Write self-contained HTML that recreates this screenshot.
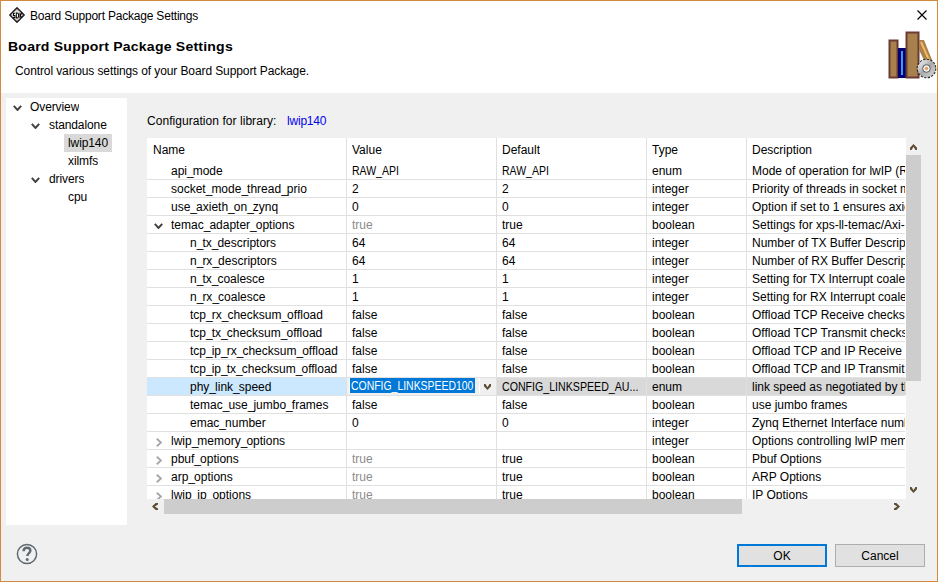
<!DOCTYPE html>
<html><head><meta charset="utf-8"><style>
*{margin:0;padding:0;box-sizing:border-box}
html,body{width:938px;height:582px;overflow:hidden;background:#f0f0f0}
body{position:relative;font-family:"Liberation Sans",sans-serif;font-size:12px;color:#000}
.a{position:absolute}
.t{position:absolute;white-space:pre;line-height:14px;height:14px}
.cell{position:absolute;white-space:pre;overflow:hidden;line-height:18px;height:18px}
.g{color:#8c8c8c}
.u{letter-spacing:-1px}
.sx{display:inline-block;transform-origin:0 50%}
</style></head><body>
<div class="a" style="left:0;top:0;width:938px;height:582px;border:1px solid #d38a40"></div>
<div class="a" style="left:1px;top:1px;width:936px;height:92px;background:#fff"></div>
<svg class="a" style="left:9px;top:7px" width="16" height="16" viewBox="0 0 16 16">
<defs><radialGradient id="sg" cx="50%" cy="50%" r="50%"><stop offset="0" stop-color="#fff"/><stop offset="0.6" stop-color="#dcdcdc"/><stop offset="0.85" stop-color="#c89060"/><stop offset="1" stop-color="#802020"/></radialGradient></defs>
<path d="M8 0.8 L15.2 8 L8 15.2 L0.8 8 Z" fill="url(#sg)" stroke="#1e1e24" stroke-width="1.4" stroke-linejoin="round"/>
<path transform="translate(8.5 8.4) scale(0.88 1) translate(-8.5 -8.4)" d="M5.8 6.3 H3.9 V8.4 H5.6 V10.6 H3.5 M7.2 5.9 V10.9 H8.2 C9.4 10.9 9.8 9.9 9.8 8.4 C9.8 6.9 9.4 5.9 8.2 5.9 Z M11.3 5.8 V11 M13.4 5.9 L11.6 8.4 L13.4 10.9" fill="none" stroke="#000" stroke-width="1.05"/>
</svg>
<div class="t" style="left:30px;top:9px;letter-spacing:-0.2px">Board Support Package Settings</div>
<svg class="a" style="left:917px;top:10px" width="10" height="10" viewBox="0 0 10 10"><path d="M0.5 0.5 L9.5 9.5 M9.5 0.5 L0.5 9.5" stroke="#000" stroke-width="1.2"/></svg>
<div class="t" style="left:8px;top:40px;font-weight:bold;font-size:13px;letter-spacing:0.2px"><span class="sx" style="transform:scaleX(1.08)">Board Support Package Settings</span></div>
<div class="t" style="left:15px;top:64px;letter-spacing:-0.1px">Control various settings of your Board Support Package.</div>
<svg class="a" style="left:886px;top:30px" width="52" height="52" viewBox="0 0 52 52">
<rect x="3.5" y="10.5" width="8" height="37" fill="#a8804c" stroke="#6b3a33" stroke-width="2"/>
<rect x="12.5" y="18.5" width="7" height="29" fill="#00007a" stroke="#000070" stroke-width="1"/>
<rect x="15" y="21" width="2" height="24" fill="#3d9be0"/>
<rect x="20.5" y="2.5" width="12" height="45" fill="#a8804c" stroke="#6b3a33" stroke-width="2"/>
<path d="M33 10 L38 10 L46 30 L40 34 L33 20 Z" fill="#a8804c"/>
<path d="M35 12 L43 30" stroke="#f5b860" stroke-width="2"/>
<defs><linearGradient id="gg" x1="0" y1="0" x2="1" y2="1"><stop offset="0" stop-color="#f4f4f4"/><stop offset="0.5" stop-color="#a8a8a8"/><stop offset="1" stop-color="#d8d8d8"/></linearGradient></defs>
<g transform="translate(40.5,38.5)">
<circle r="9.3" fill="url(#gg)" stroke="#2a2a2a" stroke-width="1.1" stroke-dasharray="2.3 1.35"/>
<circle r="7.4" fill="url(#gg)"/>
<circle r="3.8" fill="#f4f4f4" stroke="#5a5a5a" stroke-width="1"/>
<circle r="1.7" fill="#e0a060"/>
</g>
</svg>
<div class="a" style="left:6px;top:98px;width:121px;height:427px;background:#fff"></div>
<div class="a" style="left:64px;top:134px;width:48px;height:18px;background:#d9d9d9"></div>
<svg class="a" style="left:13px;top:105px" width="9" height="6" viewBox="0 0 9 6"><path d="M0.8 0.8 L4.5 5 L8.2 0.8" fill="none" stroke="#404040" stroke-width="1.9"/></svg>
<div class="cell" style="left:30px;top:98px;letter-spacing:-0.1px">Overview</div>
<svg class="a" style="left:31px;top:123px" width="9" height="6" viewBox="0 0 9 6"><path d="M0.8 0.8 L4.5 5 L8.2 0.8" fill="none" stroke="#404040" stroke-width="1.9"/></svg>
<div class="cell" style="left:49px;top:116px;letter-spacing:-0.1px">standalone</div>
<div class="cell" style="left:68px;top:134px;letter-spacing:-0.1px">lwip140</div>
<div class="cell" style="left:68px;top:152px;letter-spacing:-0.1px">xilmfs</div>
<svg class="a" style="left:31px;top:177px" width="9" height="6" viewBox="0 0 9 6"><path d="M0.8 0.8 L4.5 5 L8.2 0.8" fill="none" stroke="#404040" stroke-width="1.9"/></svg>
<div class="cell" style="left:49px;top:170px;letter-spacing:-0.1px">drivers</div>
<div class="cell" style="left:68px;top:188px;letter-spacing:-0.1px">cpu</div>
<div class="t" style="left:147px;top:114px;letter-spacing:0.05px">Configuration for library:</div>
<div class="t" style="left:287px;top:114px;color:#0000f0;letter-spacing:-0.2px">lwip140</div>
<div class="a" style="left:147px;top:138px;width:759px;height:361px;background:#fff;overflow:hidden">
<div class="a" style="left:0;top:240px;width:199px;height:17px;background:#cce8ff"></div>
<div class="a" style="left:350px;top:240px;width:409px;height:17px;background:#d9d9d9"></div>
<div class="a" style="left:0;top:41px;width:758px;height:1px;background:#e0e0e0"></div>
<div class="a" style="left:0;top:59px;width:758px;height:1px;background:#e0e0e0"></div>
<div class="a" style="left:0;top:77px;width:758px;height:1px;background:#e0e0e0"></div>
<div class="a" style="left:0;top:95px;width:758px;height:1px;background:#e0e0e0"></div>
<div class="a" style="left:0;top:113px;width:758px;height:1px;background:#e0e0e0"></div>
<div class="a" style="left:0;top:131px;width:758px;height:1px;background:#e0e0e0"></div>
<div class="a" style="left:0;top:149px;width:758px;height:1px;background:#e0e0e0"></div>
<div class="a" style="left:0;top:167px;width:758px;height:1px;background:#e0e0e0"></div>
<div class="a" style="left:0;top:185px;width:758px;height:1px;background:#e0e0e0"></div>
<div class="a" style="left:0;top:203px;width:758px;height:1px;background:#e0e0e0"></div>
<div class="a" style="left:0;top:221px;width:758px;height:1px;background:#e0e0e0"></div>
<div class="a" style="left:0;top:239px;width:758px;height:1px;background:#e0e0e0"></div>
<div class="a" style="left:0;top:257px;width:758px;height:1px;background:#e0e0e0"></div>
<div class="a" style="left:0;top:275px;width:758px;height:1px;background:#e0e0e0"></div>
<div class="a" style="left:0;top:293px;width:758px;height:1px;background:#e0e0e0"></div>
<div class="a" style="left:0;top:311px;width:758px;height:1px;background:#e0e0e0"></div>
<div class="a" style="left:0;top:329px;width:758px;height:1px;background:#e0e0e0"></div>
<div class="a" style="left:0;top:347px;width:758px;height:1px;background:#e0e0e0"></div>
<div class="a" style="left:199px;top:0;width:1px;height:361px;background:#e0e0e0"></div>
<div class="a" style="left:349px;top:0;width:1px;height:361px;background:#e0e0e0"></div>
<div class="a" style="left:499px;top:0;width:1px;height:361px;background:#e0e0e0"></div>
<div class="a" style="left:599px;top:0;width:1px;height:361px;background:#e0e0e0"></div>
<div class="cell" style="left:6px;top:3px">Name</div>
<div class="cell" style="left:205px;top:3px">Value</div>
<div class="cell" style="left:355px;top:3px">Default</div>
<div class="cell" style="left:505px;top:3px">Type</div>
<div class="cell" style="left:605px;top:3px">Description</div>
<div class="cell" style="left:24px;top:24px;width:175px">api<span class="u">_</span>mode</div>
<div class="cell" style="left:205px;top:24px;width:144px"><span class="sx" style="transform:scaleX(0.875)">RAW_API</span></div>
<div class="cell" style="left:355px;top:24px;width:144px"><span class="sx" style="transform:scaleX(0.875)">RAW_API</span></div>
<div class="cell" style="left:505px;top:24px;width:94px">enum</div>
<div class="cell" style="left:605px;top:24px;width:153px">Mode of operation for lwIP (RAW API or Socket API)</div>
<div class="cell" style="left:24px;top:42px;width:175px">socket<span class="u">_</span>mode<span class="u">_</span>thread<span class="u">_</span>prio</div>
<div class="cell" style="left:205px;top:42px;width:144px">2</div>
<div class="cell" style="left:355px;top:42px;width:144px">2</div>
<div class="cell" style="left:505px;top:42px;width:94px">integer</div>
<div class="cell" style="left:605px;top:42px;width:153px">Priority of threads in socket mode</div>
<div class="cell" style="left:24px;top:60px;width:175px">use<span class="u">_</span>axieth<span class="u">_</span>on<span class="u">_</span>zynq</div>
<div class="cell" style="left:205px;top:60px;width:144px">0</div>
<div class="cell" style="left:355px;top:60px;width:144px">0</div>
<div class="cell" style="left:505px;top:60px;width:94px">integer</div>
<div class="cell" style="left:605px;top:60px;width:153px">Option if set to 1 ensures axieth</div>
<svg class="a" style="left:7px;top:85px" width="9" height="6" viewBox="0 0 9 6"><path d="M0.8 0.8 L4.5 5 L8.2 0.8" fill="none" stroke="#404040" stroke-width="1.9"/></svg>
<div class="cell" style="left:24px;top:78px;width:175px">temac<span class="u">_</span>adapter<span class="u">_</span>options</div>
<div class="cell g" style="left:205px;top:78px;width:144px">true</div>
<div class="cell" style="left:355px;top:78px;width:144px">true</div>
<div class="cell" style="left:505px;top:78px;width:94px">boolean</div>
<div class="cell" style="left:605px;top:78px;width:153px">Settings for xps-ll-temac/Axi-Ethernet</div>
<div class="cell" style="left:43px;top:96px;width:156px">n<span class="u">_</span>tx<span class="u">_</span>descriptors</div>
<div class="cell" style="left:205px;top:96px;width:144px">64</div>
<div class="cell" style="left:355px;top:96px;width:144px">64</div>
<div class="cell" style="left:505px;top:96px;width:94px">integer</div>
<div class="cell" style="left:605px;top:96px;width:153px">Number of TX Buffer Descriptors</div>
<div class="cell" style="left:43px;top:114px;width:156px">n<span class="u">_</span>rx<span class="u">_</span>descriptors</div>
<div class="cell" style="left:205px;top:114px;width:144px">64</div>
<div class="cell" style="left:355px;top:114px;width:144px">64</div>
<div class="cell" style="left:505px;top:114px;width:94px">integer</div>
<div class="cell" style="left:605px;top:114px;width:153px">Number of RX Buffer Descriptors</div>
<div class="cell" style="left:43px;top:132px;width:156px">n<span class="u">_</span>tx<span class="u">_</span>coalesce</div>
<div class="cell" style="left:205px;top:132px;width:144px">1</div>
<div class="cell" style="left:355px;top:132px;width:144px">1</div>
<div class="cell" style="left:505px;top:132px;width:94px">integer</div>
<div class="cell" style="left:605px;top:132px;width:153px">Setting for TX Interrupt coalescing</div>
<div class="cell" style="left:43px;top:150px;width:156px">n<span class="u">_</span>rx<span class="u">_</span>coalesce</div>
<div class="cell" style="left:205px;top:150px;width:144px">1</div>
<div class="cell" style="left:355px;top:150px;width:144px">1</div>
<div class="cell" style="left:505px;top:150px;width:94px">integer</div>
<div class="cell" style="left:605px;top:150px;width:153px">Setting for RX Interrupt coalescing</div>
<div class="cell" style="left:43px;top:168px;width:156px">tcp<span class="u">_</span>rx<span class="u">_</span>checksum<span class="u">_</span>offload</div>
<div class="cell" style="left:205px;top:168px;width:144px">false</div>
<div class="cell" style="left:355px;top:168px;width:144px">false</div>
<div class="cell" style="left:505px;top:168px;width:94px">boolean</div>
<div class="cell" style="left:605px;top:168px;width:153px">Offload TCP Receive checksum</div>
<div class="cell" style="left:43px;top:186px;width:156px">tcp<span class="u">_</span>tx<span class="u">_</span>checksum<span class="u">_</span>offload</div>
<div class="cell" style="left:205px;top:186px;width:144px">false</div>
<div class="cell" style="left:355px;top:186px;width:144px">false</div>
<div class="cell" style="left:505px;top:186px;width:94px">boolean</div>
<div class="cell" style="left:605px;top:186px;width:153px">Offload TCP Transmit checksum</div>
<div class="cell" style="left:43px;top:204px;width:156px">tcp<span class="u">_</span>ip<span class="u">_</span>rx<span class="u">_</span>checksum<span class="u">_</span>offload</div>
<div class="cell" style="left:205px;top:204px;width:144px">false</div>
<div class="cell" style="left:355px;top:204px;width:144px">false</div>
<div class="cell" style="left:505px;top:204px;width:94px">boolean</div>
<div class="cell" style="left:605px;top:204px;width:153px">Offload TCP and IP Receive checksum</div>
<div class="cell" style="left:43px;top:222px;width:156px">tcp<span class="u">_</span>ip<span class="u">_</span>tx<span class="u">_</span>checksum<span class="u">_</span>offload</div>
<div class="cell" style="left:205px;top:222px;width:144px">false</div>
<div class="cell" style="left:355px;top:222px;width:144px">false</div>
<div class="cell" style="left:505px;top:222px;width:94px">boolean</div>
<div class="cell" style="left:605px;top:222px;width:153px">Offload TCP and IP Transmit checksum</div>
<div class="cell" style="left:43px;top:240px;width:156px">phy<span class="u">_</span>link<span class="u">_</span>speed</div>
<div class="cell" style="left:355px;top:240px;width:144px"><span class="sx" style="transform:scaleX(0.885)">CONFIG_LINKSPEED_AU...</span></div>
<div class="cell" style="left:505px;top:240px;width:94px">enum</div>
<div class="cell" style="left:605px;top:240px;width:153px">link speed as negotiated by the PHY</div>
<div class="cell" style="left:43px;top:258px;width:156px">temac<span class="u">_</span>use<span class="u">_</span>jumbo<span class="u">_</span>frames</div>
<div class="cell" style="left:205px;top:258px;width:144px">false</div>
<div class="cell" style="left:355px;top:258px;width:144px">false</div>
<div class="cell" style="left:505px;top:258px;width:94px">boolean</div>
<div class="cell" style="left:605px;top:258px;width:153px">use jumbo frames</div>
<div class="cell" style="left:43px;top:276px;width:156px">emac<span class="u">_</span>number</div>
<div class="cell" style="left:205px;top:276px;width:144px">0</div>
<div class="cell" style="left:355px;top:276px;width:144px">0</div>
<div class="cell" style="left:505px;top:276px;width:94px">integer</div>
<div class="cell" style="left:605px;top:276px;width:153px">Zynq Ethernet Interface number</div>
<svg class="a" style="left:9px;top:300px" width="6" height="9" viewBox="0 0 6 9"><path d="M0.8 0.8 L5 4.5 L0.8 8.2" fill="none" stroke="#a8a2a8" stroke-width="1.8"/></svg>
<div class="cell" style="left:24px;top:294px;width:175px">lwip<span class="u">_</span>memory<span class="u">_</span>options</div>
<div class="cell" style="left:205px;top:294px;width:144px"></div>
<div class="cell" style="left:355px;top:294px;width:144px"></div>
<div class="cell" style="left:505px;top:294px;width:94px">integer</div>
<div class="cell" style="left:605px;top:294px;width:153px">Options controlling lwIP memory usage</div>
<svg class="a" style="left:9px;top:318px" width="6" height="9" viewBox="0 0 6 9"><path d="M0.8 0.8 L5 4.5 L0.8 8.2" fill="none" stroke="#a8a2a8" stroke-width="1.8"/></svg>
<div class="cell" style="left:24px;top:312px;width:175px">pbuf<span class="u">_</span>options</div>
<div class="cell g" style="left:205px;top:312px;width:144px">true</div>
<div class="cell" style="left:355px;top:312px;width:144px">true</div>
<div class="cell" style="left:505px;top:312px;width:94px">boolean</div>
<div class="cell" style="left:605px;top:312px;width:153px">Pbuf Options</div>
<svg class="a" style="left:9px;top:336px" width="6" height="9" viewBox="0 0 6 9"><path d="M0.8 0.8 L5 4.5 L0.8 8.2" fill="none" stroke="#a8a2a8" stroke-width="1.8"/></svg>
<div class="cell" style="left:24px;top:330px;width:175px">arp<span class="u">_</span>options</div>
<div class="cell g" style="left:205px;top:330px;width:144px">true</div>
<div class="cell" style="left:355px;top:330px;width:144px">true</div>
<div class="cell" style="left:505px;top:330px;width:94px">boolean</div>
<div class="cell" style="left:605px;top:330px;width:153px">ARP Options</div>
<svg class="a" style="left:9px;top:354px" width="6" height="9" viewBox="0 0 6 9"><path d="M0.8 0.8 L5 4.5 L0.8 8.2" fill="none" stroke="#a8a2a8" stroke-width="1.8"/></svg>
<div class="cell" style="left:24px;top:348px;width:175px">lwip<span class="u">_</span>ip<span class="u">_</span>options</div>
<div class="cell g" style="left:205px;top:348px;width:144px">true</div>
<div class="cell" style="left:355px;top:348px;width:144px">true</div>
<div class="cell" style="left:505px;top:348px;width:94px">boolean</div>
<div class="cell" style="left:605px;top:348px;width:153px">IP Options</div>
<div class="a" style="left:200px;top:240px;width:149px;height:17px;background:#f0f0f0"></div>
<div class="a" style="left:202px;top:240px;width:1px;height:16px;background:#fff"></div>
<div class="a" style="left:332px;top:240px;width:1px;height:16px;background:#fff"></div>
<div class="a" style="left:203px;top:240px;width:125px;height:15px;background:#0078d7"></div>
<div class="cell" style="left:204px;top:239px;color:#fff;width:124px"><span class="sx" style="transform:scaleX(0.87)">CONFIG_LINKSPEED100</span></div>
<svg class="a" style="left:337px;top:246px" width="7" height="6" viewBox="0 0 7 6"><polygon points="0,0 1.5,0 3.5,3.2 5.5,0 7,0 7,2.3 3.5,6 0,2.3" fill="#5c4c32"/></svg>
</div>
<div class="a" style="left:906px;top:155px;width:15px;height:226px;background:#cdcdcd"></div>
<svg class="a" style="left:910px;top:487px" width="7" height="6" viewBox="0 0 7 6"><polygon points="0,0 1.5,0 3.5,3.2 5.5,0 7,0 7,2.3 3.5,6 0,2.3" fill="#5c4c32"/></svg>
<svg class="a" style="left:910px;top:144px" width="7" height="6" viewBox="0 0 7 6"><polygon points="0,6 1.5,6 3.5,2.8 5.5,6 7,6 7,3.7 3.5,0 0,3.7" fill="#5c4c32"/></svg>
<div class="a" style="left:164px;top:499px;width:578px;height:15px;background:#cdcdcd"></div>
<svg class="a" style="left:152px;top:503px" width="6" height="7" viewBox="0 0 6 7"><polygon points="6,0 6,1.5 2.8,3.5 6,5.5 6,7 3.7,7 0,3.5 3.7,0" fill="#5c4c32"/></svg>
<svg class="a" style="left:894px;top:503px" width="6" height="7" viewBox="0 0 6 7"><polygon points="0,0 0,1.5 3.2,3.5 0,5.5 0,7 2.3,7 6,3.5 2.3,0" fill="#5c4c32"/></svg>
<svg class="a" style="left:16px;top:543px" width="22" height="22" viewBox="0 0 22 22">
<circle cx="11" cy="11" r="9.6" fill="none" stroke="#5f6a73" stroke-width="1.5"/>
<path d="M7.6 8.2 C7.6 5.8 9.2 4.8 11 4.8 C12.9 4.8 14.4 5.9 14.4 7.8 C14.4 9.9 11.3 10.4 11.3 13" fill="none" stroke="#5f6a73" stroke-width="2.4"/>
<circle cx="11.2" cy="16.4" r="1.5" fill="#5f6a73"/>
</svg>
<div class="a" style="left:737px;top:544px;width:90px;height:23px;background:#e1e1e1;border:2px solid #0078d7"></div>
<div class="cell" style="left:737px;top:547px;width:90px;text-align:center">OK</div>
<div class="a" style="left:835px;top:544px;width:90px;height:23px;background:#e1e1e1;border:1px solid #adadad"></div>
<div class="cell" style="left:835px;top:547px;width:90px;text-align:center">Cancel</div>
</body></html>
